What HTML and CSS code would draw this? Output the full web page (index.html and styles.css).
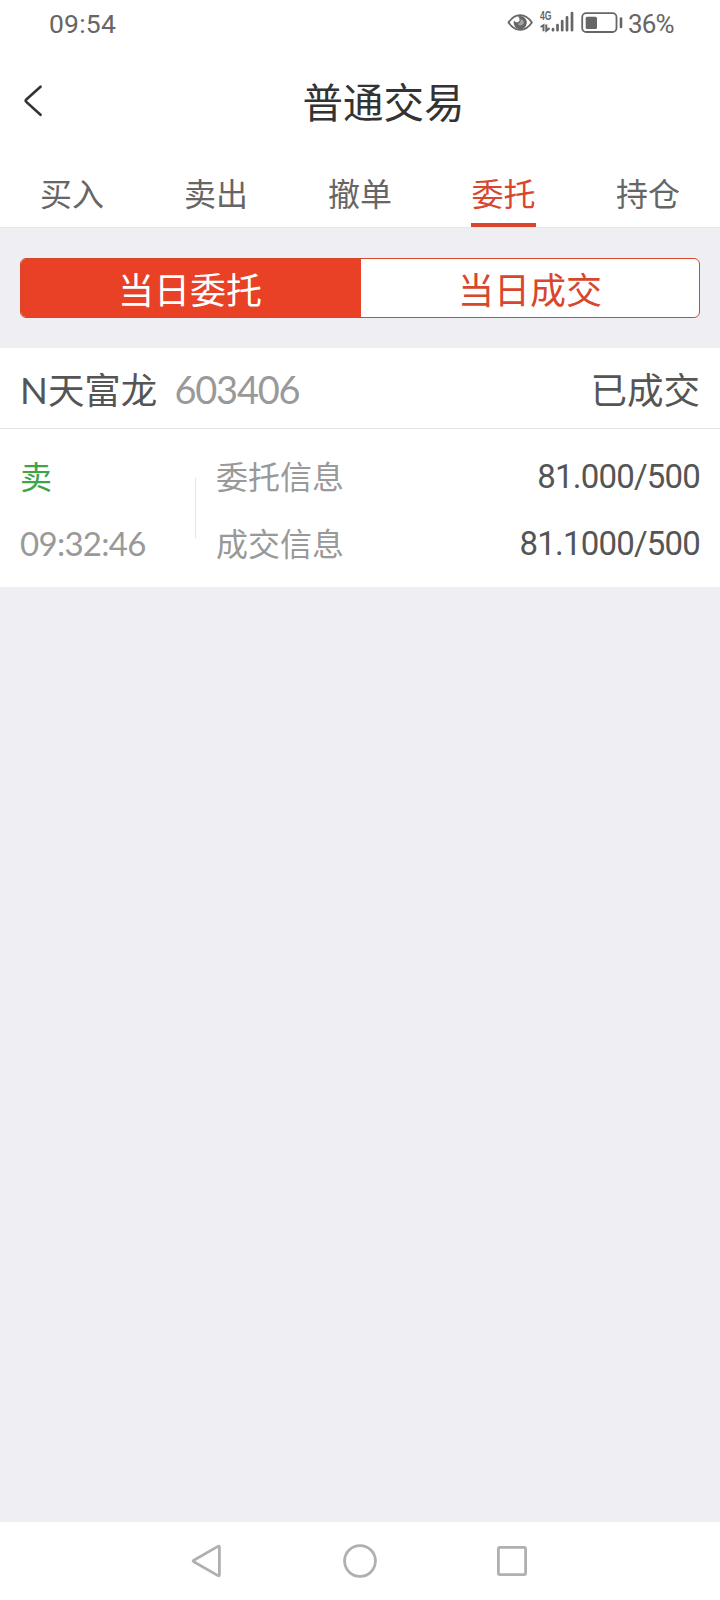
FILE: index.html
```html
<!DOCTYPE html>
<html lang="zh-CN">
<head>
<meta charset="utf-8">
<title>普通交易</title>
<link rel="stylesheet" href="styles.css">
</head>
<body>
<div class="screen">
  <div class="status">
    <span class="clock">09:54</span>
    <div class="status-right">
      <svg class="indicators" width="118" height="32" viewBox="0 0 118 32">
        <path d="M1.500 15.500C5 10.300 9 8.100 13.200 8.100s8.200 2.200 11.700 7.400c-3.500 5.200-7.500 7.400-11.700 7.400S5 20.700 1.500 15.500z" fill="none" stroke="#666" stroke-width="1.800" stroke-linejoin="round"/>
        <path d="M13.200 9A6.600 6.600 0 1 1 6.900 13.600q1.200 2.200 3.600 1.600 2.600-.8 2-3.400-.5-1.600-1.800-2.300z" fill="#666"/>
        <path d="M13.500 12.200q.6 3.600-2.800 4.600 1.800 2.400 4.400 1.200 2.600-1.600 1.300-4.200-1-1.600-2.900-1.600z" fill="#a5a5a5"/>
        <text class="net" x="33" y="12.500" textLength="11.500" lengthAdjust="spacingAndGlyphs">4G</text>
        <path d="M33.600 20l2.900-1.800v6M39.300 17.500v6.200l3.200-2.600" fill="none" stroke="#666" stroke-width="2"/>
        <path d="M46 22v1.200M50.500 18v5.200M55.200 14v9.200M60 10.300v12.900M65 6v17.200" stroke="#666" stroke-width="2.700" stroke-linecap="round"/>
        <rect x="75.200" y="6.200" width="34.300" height="18.800" rx="4" fill="none" stroke="#666" stroke-width="1.800"/>
        <rect x="78.700" y="9.700" width="11.300" height="12.400" rx="1.500" fill="#666"/>
        <path d="M114 11.500v8.500" stroke="#666" stroke-width="2.600" stroke-linecap="round"/>
      </svg>
      <span class="percent">36%</span>
    </div>
  </div>

  <header class="header">
    <svg class="back" width="20" height="32" viewBox="0 0 20 32">
      <path d="M16.500 1.700L2.300 14.500Q1 15.700 2.300 16.900L16.500 29.800" fill="none" stroke="#333" stroke-width="2.600" stroke-linecap="round"/>
    </svg>
    <h1 class="title">普通交易</h1>
  </header>

  <nav class="tabs">
    <a class="tab"><span>买入</span></a>
    <a class="tab"><span>卖出</span></a>
    <a class="tab"><span>撤单</span></a>
    <a class="tab tab-active"><span>委托</span></a>
    <a class="tab"><span>持仓</span></a>
  </nav>

  <div class="segments">
    <div class="segment segment-active">当日委托</div>
    <div class="segment">当日成交</div>
  </div>

  <section class="order">
    <div class="order-head">
      <div class="stock"><span class="latin">N</span>天富龙<span class="code">603406</span></div>
      <div class="state">已成交</div>
    </div>
    <div class="order-body">
      <div class="side">
        <div class="line sell">卖</div>
        <div class="line time">09:32:46</div>
      </div>
      <div class="divider"></div>
      <div class="details">
        <div class="line"><span class="label">委托信息</span><span class="price">81.000/500</span></div>
        <div class="line"><span class="label">成交信息</span><span class="price">81.1000/500</span></div>
      </div>
    </div>
  </section>

  <footer class="navbar">
    <svg width="34" height="36" viewBox="0 0 34 36"><path d="M28.400 4.200v27.600q0 1.600-1.400.8L2.800 18.800q-1.400-.8 0-1.600L27 3.400q1.400-.8 1.400.8z" fill="none" stroke="#b0b0b0" stroke-width="2.800"/></svg>
    <svg width="34" height="36" viewBox="0 0 34 36"><circle cx="17" cy="18" r="15.400" fill="none" stroke="#b0b0b0" stroke-width="2.800"/></svg>
    <svg width="34" height="36" viewBox="0 0 34 36"><rect x="3.400" y="4.400" width="27.200" height="27.200" rx="1.500" fill="none" stroke="#b0b0b0" stroke-width="2.800"/></svg>
  </footer>
</div>
</body>
</html>
```
FILE: styles.css
```css
* { box-sizing: border-box; }

body {
  margin: 0;
  background: #efeef3;
  color: #555;
  font-family: "Noto Sans CJK SC", sans-serif;
}

.screen {
  display: flex;
  flex-direction: column;
  width: 720px;
  height: 1600px;
  overflow: hidden;
}

.status {
  display: flex;
  justify-content: space-between;
  height: 48px;
  padding: 0 46px 0 49px;
  background: #fff;
  color: #666;
  font-family: Roboto, sans-serif;
  font-size: 26.500px;
  line-height: 48px;
}

.clock { letter-spacing: 0.200px; }

.status-right { display: flex; }

.indicators { margin: 7px 3px 0 0; }

.net {
  font: bold 12px "Liberation Sans", sans-serif;
  fill: #666;
}

.percent {
  width: 46px;
  font-size: 26px;
  letter-spacing: -0.900px;
}

.header {
  display: flex;
  align-items: center;
  height: 106px;
  padding: 0 0 0 24px;
  background: #fff;
}

.title {
  flex: 1;
  margin: 0;
  padding-left: 3px;
  color: #333;
  font-size: 40.500px;
  font-weight: 400;
  line-height: 60px;
  text-align: center;
}

.tabs {
  display: grid;
  grid-template-columns: repeat(5, 1fr);
  height: 74px;
  border-bottom: 1px solid #e8e8ea;
  background: #fff;
}

.tab {
  display: flex;
  justify-content: center;
  color: #666;
  font-size: 32px;
  line-height: 76px;
}

.tab span { height: 73px; }

.tab-active {
  padding-right: 1px;
  color: #d8472d;
}

.tab-active span { border-bottom: 4px solid #d8472d; }

.segments {
  display: flex;
  height: 60px;
  margin: 30px 20px;
  overflow: hidden;
  border: 1px solid #d8472d;
  border-radius: 6px;
  background: #fff;
}

.segment {
  flex: 1;
  color: #d8472d;
  font-size: 36px;
  line-height: 58px;
  text-align: center;
}

.segment-active {
  flex: 0 0 340px;
  padding-right: 2px;
  background: #e84125;
  color: #fff;
}

.order { background: #fff; }

.order-head {
  display: flex;
  justify-content: space-between;
  height: 81px;
  padding: 0 20px;
  border-bottom: 1px solid #e5e5e5;
  font-size: 36.500px;
  line-height: 82px;
}

.latin { font-family: Lato, sans-serif; }

.code {
  margin-left: 17px;
  color: #999;
  font-family: Lato, sans-serif;
  font-size: 38px;
  letter-spacing: -1.200px;
}

.order-body {
  display: flex;
  height: 158px;
  padding: 14px 20px;
  font-size: 32px;
}

.side { width: 175px; }

.line {
  display: flex;
  justify-content: space-between;
  height: 67px;
  line-height: 67px;
}

.sell {
  color: #3fa447;
  line-height: 64px;
}

.time {
  color: #999;
  font-family: Lato, sans-serif;
  font-size: 33px;
  letter-spacing: -0.700px;
}

.divider {
  width: 1px;
  height: 60px;
  margin-top: 35px;
  background: #e5e5e5;
}

.details {
  flex: 1;
  padding-left: 20px;
}

.label {
  color: #999;
  line-height: 64px;
}

.price {
  font-family: Roboto, sans-serif;
  font-size: 33px;
  letter-spacing: -0.800px;
}

.navbar {
  display: flex;
  justify-content: center;
  align-items: center;
  gap: 118px;
  height: 78px;
  margin-top: auto;
  background: #fff;
}
```
